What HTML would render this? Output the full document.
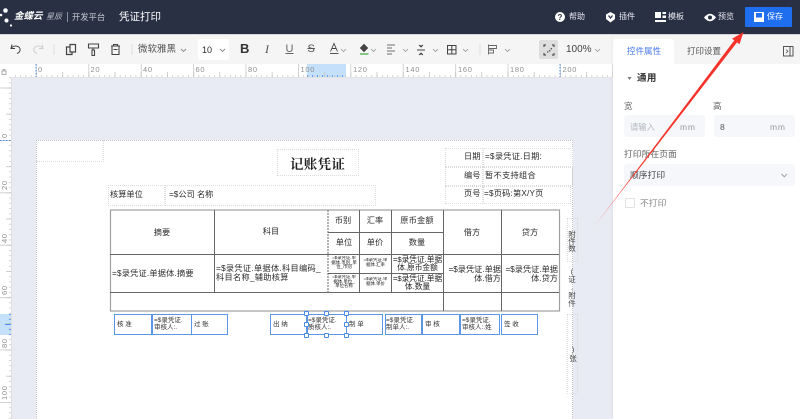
<!DOCTYPE html>
<html lang="zh"><head><meta charset="utf-8"><title>凭证打印</title>
<style>
*{box-sizing:border-box}
html,body{margin:0;padding:0;width:800px;height:419px;overflow:hidden;background:#e8ebf3}
body{font-family:"Liberation Sans","Noto Sans CJK SC",sans-serif;color:#333;position:relative}
#r{position:absolute;left:0;top:0;width:800px;height:419px;overflow:hidden;filter:blur(.35px)}
.a{position:absolute}
.t{position:absolute;white-space:nowrap;line-height:10px;font-size:8.2px;color:#2c2c2c}
.c{transform:translateX(-50%)}
.h{color:#e8eaf0;font-size:8px;top:12px}
.d{position:absolute;border:1px dotted #dcdcdc}
.b{position:absolute;border:1px solid #5b95e6;background:#fff;top:314px;height:21px}
.bt{position:absolute;white-space:nowrap;font-size:6.5px;line-height:7px;color:#333}
.hd{position:absolute;width:5px;height:5px;background:#fff;border:1px solid #4a8be6;border-radius:1px}
.m{font-size:4.4px;line-height:4.6px;text-align:center;color:#111;position:absolute;overflow:hidden}
svg{position:absolute;overflow:visible}
.v{position:absolute;font-size:7.5px;line-height:7px;width:10px;text-align:center;color:#444}
.r{position:absolute;white-space:nowrap;top:65px;line-height:10px;font-size:7.5px;color:#8f8f8f;letter-spacing:.7px}
</style></head><body><div id="r">

<!-- header -->
<div class="a" style="left:0;top:0;width:800px;height:34px;background:#2a3044"></div>
<div class="a" style="left:0;top:34px;width:800px;height:1px;background:#d8d8d8"></div>
<svg style="left:0;top:0" width="14" height="30"><g fill="#fff"><circle cx="5.5" cy="10.5" r="2.3"/><circle cx="1" cy="15" r="1.3"/><circle cx="6.5" cy="20.5" r="2"/><circle cx="11" cy="25.5" r="1.1"/></g></svg>
<span class="t" style="left:14px;top:12px;color:#fff;font-size:9.5px;font-weight:bold;font-style:italic">金蝶云</span>
<span class="t" style="left:46px;top:12px;color:#b8bdc9;font-size:8px;font-style:italic">星辰</span>
<div class="a" style="left:67px;top:12px;width:1px;height:10px;background:#8a8f9e"></div>
<span class="t" style="left:72px;top:12px;color:#c9ccd5;font-size:8.3px">开发平台</span>
<span class="t" style="left:119px;top:12px;color:#fff;font-size:10.5px">凭证打印</span>

<svg style="left:555px;top:12px" width="10" height="10"><circle cx="5" cy="5" r="5" fill="#fff"/><text x="5" y="8" text-anchor="middle" font-size="8" font-weight="bold" fill="#2a3044" font-family="Liberation Sans">?</text></svg>
<span class="t h" style="left:569px">帮助</span>
<svg style="left:605px;top:12px" width="11" height="11"><path d="M1 2.5L5.5 0 10 2.5V7L5.5 10.5 1 7Z" fill="#fff"/><path d="M3.5 3.5L5.5 6l2-2.5" fill="none" stroke="#2a3044" stroke-width="1.2"/></svg>
<span class="t h" style="left:619px">插件</span>
<svg style="left:655px;top:12px" width="11" height="10"><path d="M0 0h6v6H0ZM7.5 0H11v2H7.5ZM7.5 3.5H11v2.500H7.5ZM0 8h11v2H0Z" fill="#fff"/></svg>
<span class="t h" style="left:668px">模板</span>
<svg style="left:704px;top:13px" width="12" height="9"><path d="M0 4.500Q6-3 12 4.500 6 12 0 4.500Z" fill="#fff"/><circle cx="6" cy="4.500" r="2" fill="#2a3044"/></svg>
<span class="t h" style="left:718px">预览</span>
<div class="a" style="left:745px;top:7px;width:47px;height:20px;background:#1f6ef0;border-radius:1px"></div>
<svg style="left:754px;top:12px" width="10" height="10"><path d="M0 0h10v10H0Z" fill="#fff"/><path d="M2 1h6v4.500H2Z" fill="#1f6ef0"/></svg>
<span class="t h" style="left:767px;color:#fff">保存</span>

<!-- toolbar -->
<div class="a" style="left:0;top:35px;width:613px;height:29px;background:#f5f5f5"></div>
<svg style="left:0;top:35px" width="613" height="29" fill="none" stroke="#444" stroke-width="1">
 <path d="M12 9.500l-1 4 4 0M11.500 13C14 9.500 21 11 20 15.500c-.3 1.500-1.500 2.500-3 3"/>
 <path d="M42 9.500l1 4-4 0M42.500 13C40 9.500 33 11 34 15.500c.3 1.500 1.500 2.500 3 3" stroke="#cfcfcf"/>
 <path d="M54 9v11" stroke="#ddd"/>
 <path d="M70 9.500h5.500v7.500H70ZM70 12h-3.500v7.500H72V17" stroke-width="1.200"/>
 <path d="M88.500 9h10v4h-10ZM93 13v2M92 15h2.500v5.500H92Z" stroke-width="1.100"/>
 <path d="M111 11h9M113.500 11V9.500h4V11M112 11v8.500h7V11M113.500 14.500h4" stroke-width="1.100"/>
 <path d="M132 9v11" stroke="#ddd"/>
 <path d="M181 14l2.500 2.500 2.500-2.500" stroke="#888" stroke-width=".9"/>
 <path d="M341 14l2.500 2.500 2.500-2.500M371 14l2.500 2.500 2.500-2.500M403 14l2.500 2.500 2.500-2.500M433 14l2.500 2.500 2.500-2.500M463 14l2.500 2.500 2.500-2.500M505 14l2.500 2.500 2.500-2.500M595 14l2.500 2.500 2.500-2.500" stroke="#999" stroke-width=".8"/>
 <path d="M330.500 16.500l3.500-8 3.500 8M331.800 13.500h4.400" stroke-width=".9"/><path d="M330 18.500h8.500" stroke="#555"/>
 <path d="M364 9.500l3.500 3.500-3.500 3.500-3.500-3.500Z" stroke-width="1" fill="#444"/><path d="M360 19h8.500" stroke="#4cb050" stroke-width="1.300"/>
 <path d="M387 10h8M387 13h5M387 16h8M387 19h5" stroke-width=".8"/>
 <path d="M417 15h8M421 10v2M421 18v2M419 10l2 2 2-2M419 20l2-2 2 2" stroke-width=".9"/>
 <path d="M447.500 10.500h8.500V19h-8.500ZM451.800 10.500V19M447.500 14.800H456" stroke-width="1"/>
 <path d="M480 9v11" stroke="#ddd"/>
 <path d="M488.500 9.500v10M488.500 10.500h8v3h-8M488.500 15h5v3h-5" stroke-width=".9" stroke="#666"/>
</svg>
<span class="t" style="left:138px;top:45px;font-size:9.500px;color:#555">微软雅黑</span>
<div class="a" style="left:198px;top:39px;width:31px;height:21px;background:#fff;border-radius:2px"></div>
<span class="t" style="left:202px;top:45px;font-size:9px">10</span>
<svg style="left:219px;top:49px" width="8" height="4" fill="none" stroke="#888" stroke-width=".9"><path d="M1 0l2.500 2.500L6 0"/></svg>
<span class="t" style="left:240px;top:44px;font-size:13px;font-weight:bold;color:#333">B</span>
<span class="t" style="left:265px;top:44px;font-size:12px;font-style:italic;font-family:'Liberation Serif',serif;color:#555">I</span>
<span class="t" style="left:285.500px;top:44px;font-size:11px;color:#666;text-decoration:underline">U</span>
<span class="t" style="left:307.500px;top:44px;font-size:11px;color:#555;text-decoration:line-through">S</span>
<div class="a" style="left:539px;top:40px;width:19px;height:19px;background:#dedede;border-radius:2px"></div>
<svg style="left:544px;top:45px" width="10" height="10" fill="none" stroke="#333" stroke-width="1"><path d="M0 2V0h2M8 0h2v2M10 8v2H8M2 10H0V8"/><path d="M3 7l1.500 0 1-1 1.500-2 1-1" stroke-dasharray="1.500 1"/></svg>
<span class="t" style="left:566px;top:45px;font-size:10px;color:#444">100%</span>

<!-- top ruler -->
<div class="a" style="left:0;top:64px;width:613px;height:13px;background:#fff"></div>
<div class="a" style="left:307px;top:64px;width:39px;height:13px;background:#c5e0fb"></div>
<svg style="left:0;top:64px" width="613" height="13">
 <defs>
 <pattern id="p1" x="36" y="0" width="5.24" height="13" patternUnits="userSpaceOnUse"><rect x="0" y="11" width=".7" height="2" fill="#c4c4c4"/></pattern>
 <pattern id="p2" x="36" y="0" width="26.2" height="13" patternUnits="userSpaceOnUse"><rect x="0" y="8" width=".7" height="5" fill="#bcbcbc"/></pattern>
 <pattern id="p3" x="36" y="0" width="52.4" height="13" patternUnits="userSpaceOnUse"><rect x="0" y="0" width=".8" height="13" fill="#c8c8c8"/></pattern>
 <pattern id="q1" x="0" y="140" width="13" height="5.24" patternUnits="userSpaceOnUse"><rect x="9" y="0" width="2" height=".7" fill="#c4c4c4"/></pattern>
 <pattern id="q2" x="0" y="140" width="13" height="26.2" patternUnits="userSpaceOnUse"><rect x="6" y="0" width="5" height=".7" fill="#bcbcbc"/></pattern>
 <pattern id="q3" x="0" y="140" width="13" height="52.4" patternUnits="userSpaceOnUse"><rect x="0" y="0" width="11" height=".8" fill="#c8c8c8"/></pattern>
 </defs>
 <rect x="11" width="602" height="13" fill="url(#p1)"/><rect x="11" width="602" height="13" fill="url(#p2)"/><rect x="11" width="602" height="13" fill="url(#p3)"/>
 <path d="M36 0v13M560 0v13" stroke="#4a8be6" stroke-width="1" stroke-dasharray="1.500 1.500"/>
 <path d="M307 12h39" stroke="#4a8be6" stroke-width="1.500" stroke-dasharray="1 4"/>
 <path d="M2 7h4v3.500H2ZM3 7V5.500h2V7" fill="none" stroke="#999" stroke-width=".8"/>
</svg>
<div class="a" style="left:0;top:76.500px;width:613px;height:1px;background:#e3e3e3"></div>
<span class="r" style="left:38px">0</span>
<span class="r" style="left:90.500px">20</span>
<span class="r" style="left:143px">40</span>
<span class="r" style="left:195.500px">60</span>
<span class="r" style="left:248px">80</span>
<span class="r" style="left:300.500px">100</span>
<span class="r" style="left:353px">120</span>
<span class="r" style="left:405.500px">140</span>
<span class="r" style="left:458px">160</span>
<span class="r" style="left:510px">180</span>
<span class="r" style="left:562.500px">200</span>

<!-- left ruler -->
<div class="a" style="left:0;top:77px;width:11px;height:342px;background:#fff"></div>
<div class="a" style="left:0;top:314px;width:11px;height:21px;background:#c5e0fb"></div>
<svg style="left:0;top:0" width="12" height="419">
 <rect x="0" y="77" width="12" height="342" fill="url(#q1)"/><rect x="0" y="77" width="12" height="342" fill="url(#q2)"/><rect x="0" y="77" width="12" height="342" fill="url(#q3)"/>
 <path d="M0 140.500h11" stroke="#4a8be6" stroke-dasharray="1.500 1.500"/>
 <path d="M10 314v21" stroke="#4a8be6" stroke-width="1.500" stroke-dasharray="1 4"/>
 <path d="M5 324.500h6" stroke="#4a8be6"/>
 <g font-size="7.500" fill="#8f8f8f" font-family="Liberation Sans" letter-spacing=".7">
  <text transform="translate(7,138) rotate(-90)">0</text>
  <text transform="translate(7,190) rotate(-90)">20</text>
  <text transform="translate(7,243) rotate(-90)">40</text>
  <text transform="translate(7,295) rotate(-90)">60</text>
  <text transform="translate(7,348) rotate(-90)">80</text>
  <text transform="translate(7,400) rotate(-90)">100</text>
 </g>
</svg>
<div class="a" style="left:11px;top:77px;width:1px;height:342px;background:#dfdfdf"></div>

<!-- page -->
<div class="a" style="left:36px;top:140px;width:537px;height:279px;background:#fff;border:1px dotted #c4c4c4;border-bottom:0"></div>
<div class="d" style="left:36px;top:140px;width:68px;height:22px;border-top:0;border-left:0"></div>
<div class="d" style="left:277px;top:149px;width:82px;height:27px"></div>
<span class="t" style="left:290px;top:158px;font-size:13.500px;line-height:13px;font-family:'Liberation Serif','Noto Serif CJK SC',serif;font-weight:bold;color:#222;letter-spacing:.3px">记账凭证</span>
<div class="d" style="left:108px;top:185px;width:57px;height:21px"></div>
<div class="d" style="left:165px;top:185px;width:211px;height:21px"></div>
<span class="t" style="left:110px;top:190px">核算单位</span>
<span class="t" style="left:169px;top:190px">=$公司 名称</span>

<div class="d" style="left:445px;top:148px;width:38px;height:19px"></div><div class="d" style="left:483px;top:148px;width:90px;height:19px"></div>
<div class="d" style="left:445px;top:167px;width:38px;height:19px"></div><div class="d" style="left:483px;top:167px;width:90px;height:19px"></div>
<div class="d" style="left:445px;top:186px;width:38px;height:18px"></div><div class="d" style="left:483px;top:186px;width:88px;height:18px"></div>
<span class="t" style="left:464px;top:152px">日期</span><span class="t" style="left:485px;top:152px;letter-spacing:.25px">=$录凭证.日期:</span>
<span class="t" style="left:464px;top:171px">编号</span><span class="t" style="left:485px;top:171px;letter-spacing:.3px">暂不支持组合</span>
<span class="t" style="left:464px;top:189px">页号</span><span class="t" style="left:484px;top:189px;letter-spacing:.2px">=$页码:第X/Y页</span>

<!-- table -->
<svg style="left:0;top:0" width="800" height="419" fill="none">
 <rect x="110.500" y="210" width="449" height="101" stroke="#a0a0a0" stroke-width="1.200" fill="#fff"/>
 <g stroke="#666" stroke-width="1">
  <path d="M214.500 210v83M443.500 210v101M501.500 210v101"/>
  <path d="M110 254.500h449M110 292.500h449"/>
  <path d="M328 232.500h115M328 273.500h115M359.500 210v83M391.500 210v83"/>
 </g>
 <path d="M328 210v83" stroke="#666" stroke-dasharray="2 1"/>
</svg>
<span class="t c" style="left:162px;top:228px">摘要</span>
<span class="t c" style="left:271px;top:227px">科目</span>
<span class="t c" style="left:343px;top:216px">币别</span><span class="t c" style="left:375px;top:216px">汇率</span><span class="t c" style="left:417px;top:216px;letter-spacing:.2px">原币金额</span>
<span class="t c" style="left:344px;top:238px">单位</span><span class="t c" style="left:375px;top:238px">单价</span><span class="t c" style="left:417px;top:238px">数量</span>
<span class="t c" style="left:472px;top:228px">借方</span><span class="t c" style="left:530px;top:228px">贷方</span>
<span class="t" style="left:112px;top:269px;letter-spacing:.2px">=$录凭证.单据体.摘要</span>
<div class="a" style="left:216px;top:265px;width:112px;font-size:8.2px;line-height:8.500px;letter-spacing:.3px;color:#2c2c2c;white-space:nowrap">=$录凭证.单据体.科目编码_<br>科目名称_辅助核算</div>
<div class="m" style="left:329px;top:256px;width:30px;height:17px">=$录凭证.单<br>据体.币别_单<br>位_币别</div>
<div class="m" style="left:329px;top:275px;width:30px;height:17px">=$录凭证.单<br>据体.单位_<br>单位名称</div>
<div class="m" style="left:360px;top:258px;width:31px;height:14px">=$录凭证.单<br>据体.汇率</div>
<div class="m" style="left:360px;top:277px;width:31px;height:14px">=$录凭证.单<br>据体.单价</div>
<div class="a" style="left:392px;top:256px;width:51px;font-size:7.700px;line-height:7.500px;text-align:center;color:#222;white-space:nowrap">=$录凭证.单据<br>体.原币金额</div>
<div class="a" style="left:392px;top:275px;width:51px;font-size:7.700px;line-height:7.500px;text-align:center;color:#222;white-space:nowrap">=$录凭证.单据<br>体.数量</div>
<div class="a" style="left:444px;top:266px;width:58px;font-size:8.200px;line-height:8.500px;text-align:right;padding-right:1px;color:#2c2c2c;white-space:nowrap">=$录凭证.单据<br>体.借方</div>
<div class="a" style="left:502px;top:266px;width:57px;font-size:8.200px;line-height:8.500px;text-align:right;padding-right:1px;color:#2c2c2c;white-space:nowrap">=$录凭证.单据<br>体.贷方</div>

<!-- right side labels -->
<div class="d" style="left:567px;top:218px;width:11px;height:44px"></div>
<div class="v" style="left:567px;top:231px">附<br>件<br>数</div>
<div class="v" style="left:567px;top:268px;line-height:8px">(<br>证<br>.<br>附<br>件</div>
<div class="d" style="left:567px;top:314px;width:11px;height:80px"></div>
<div class="v" style="left:568px;top:345px;line-height:9px">)<br>张</div>

<!-- signature row -->
<div class="b" style="left:114px;width:38px"></div><span class="bt" style="left:117px;top:321px">核 准</span>
<div class="b" style="left:152px;width:40px"></div><span class="bt" style="left:154px;top:317px">=$录凭证.<br>审核人:.</span>
<div class="b" style="left:191px;width:37px"></div><span class="bt" style="left:194px;top:321px">过 账</span>
<div class="b" style="left:270px;width:37px"></div><span class="bt" style="left:273px;top:321px">出 纳</span>
<div class="b" style="left:307px;width:40px"></div><span class="bt" style="left:308px;top:317px">=$录凭证.<br>质核人:.</span>
<div class="b" style="left:346px;width:37px"></div><span class="bt" style="left:349px;top:321px">制 单</span>
<div class="b" style="left:385px;width:37px"></div><span class="bt" style="left:386px;top:317px">=$录凭证.<br>制单人:.</span>
<div class="b" style="left:422px;width:38px"></div><span class="bt" style="left:425px;top:321px">审 核</span>
<div class="b" style="left:460px;width:40px"></div><span class="bt" style="left:462px;top:317px">=$录凭证.<br>审核人:.姓</span>
<div class="b" style="left:501px;width:37px"></div><span class="bt" style="left:504px;top:321px">签 收</span>
<div class="hd" style="left:304px;top:311px"></div><div class="hd" style="left:324px;top:311px"></div><div class="hd" style="left:344px;top:311px"></div>
<div class="hd" style="left:304px;top:322px"></div><div class="hd" style="left:344px;top:322px"></div>
<div class="hd" style="left:304px;top:333px"></div><div class="hd" style="left:324px;top:333px"></div><div class="hd" style="left:344px;top:333px"></div>

<!-- right panel -->
<div class="a" style="left:613px;top:35px;width:187px;height:384px;background:#fff;box-shadow:-1px 0 2px rgba(0,0,0,.04)"></div>
<div class="a" style="left:613px;top:35px;width:187px;height:29px;background:#f5f5f5"></div>
<div class="a" style="left:613px;top:39px;width:61px;height:25px;background:#fff;border-radius:3px 3px 0 0"></div>
<span class="t" style="left:627px;top:46px;color:#4a78f0;font-size:8.500px">控件属性</span>
<span class="t" style="left:687px;top:46px;color:#555;font-size:8.500px">打印设置</span>
<svg style="left:783px;top:46px" width="11" height="11" fill="none" stroke="#555"><rect x=".5" y=".5" width="9.500" height="9.500"/><path d="M7 .5v9.500" /><path d="M3 3.500l2 1.800-2 1.800" stroke-width=".8"/></svg>
<svg style="left:627px;top:77px" width="6" height="4"><path d="M.5 0h4L2.500 3Z" fill="#777"/></svg>
<span class="t" style="left:637px;top:74px;font-size:9.500px;font-weight:bold;color:#333;letter-spacing:.4px">通用</span>
<span class="t" style="left:624px;top:101px;font-size:8.500px;color:#666">宽</span>
<span class="t" style="left:713px;top:101px;font-size:8.500px;color:#666">高</span>
<div class="a" style="left:624px;top:115px;width:81px;height:22px;background:#f5f7fb;border-radius:3px"></div>
<div class="a" style="left:714px;top:115px;width:81px;height:22px;background:#f5f7fb;border-radius:3px"></div>
<span class="t" style="left:630px;top:122px;font-size:8.300px;color:#b5b9c2">请输入</span>
<span class="t" style="left:680px;top:122px;font-size:8.500px;color:#999;letter-spacing:.8px">mm</span>
<span class="t" style="left:720px;top:122px;font-size:8.500px;color:#555">8</span>
<span class="t" style="left:770px;top:122px;font-size:8.500px;color:#999;letter-spacing:.8px">mm</span>
<span class="t" style="left:624px;top:149px;font-size:8.800px;color:#666">打印所在页面</span>
<div class="a" style="left:624px;top:164px;width:171px;height:22px;background:#f5f7fb;border-radius:3px"></div>
<span class="t" style="left:630px;top:170px;font-size:8.800px;color:#444">顺序打印</span>
<svg style="left:781px;top:174px" width="7" height="4" fill="none" stroke="#999" stroke-width=".9"><path d="M.5 0l2.800 2.800L6 0"/></svg>
<div class="a" style="left:625px;top:198px;width:10px;height:10px;background:#fff;border:1px solid #e2e2e2;border-radius:1px"></div>
<span class="t" style="left:640px;top:198px;font-size:8.800px;color:#888">不打印</span>

<!-- red arrow -->
<svg style="left:0;top:0" width="800" height="419">
 <defs><linearGradient id="g" gradientUnits="userSpaceOnUse" x1="592" y1="229" x2="640" y2="167"><stop offset="0" stop-color="#f4a9a0"/><stop offset="1" stop-color="#f5332a"/></linearGradient></defs>
 <path d="M592 229.500L734.300 40.400 732 38.800 743.500 32 739.500 44.300 737 42.400Z" fill="url(#g)"/>
</svg>
</div></body></html>
